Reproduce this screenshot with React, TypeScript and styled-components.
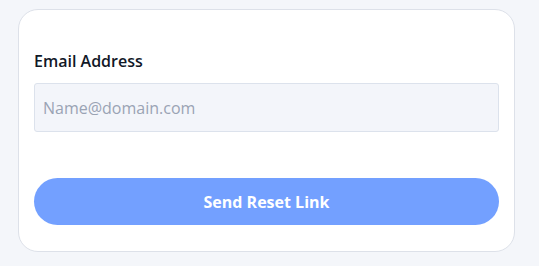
import React from 'react';
import styled, { createGlobalStyle } from 'styled-components';

const GlobalStyle = createGlobalStyle`
  html, body {
    margin: 0;
    padding: 0;
    background: #f4f6fa;
    font-family: "Open Sans", "DejaVu Sans", sans-serif;
  }
`;

const Page = styled.div`
  padding: 9px 0 0 18px;
`;

const Card = styled.form`
  width: 497px;
  box-sizing: border-box;
  background: #ffffff;
  border: 1px solid #dde1e9;
  border-radius: 20px;
  padding: 40px 15px 26px;
  display: flex;
  flex-direction: column;
`;

const Label = styled.label`
  font-size: 16px;
  font-weight: 600;
  line-height: 22px;
  color: #111827;
  margin-bottom: 11px;
`;

const Input = styled.input`
  height: 49px;
  box-sizing: border-box;
  width: 100%;
  background: #f3f5fa;
  border: 1px solid #dce2ec;
  border-radius: 3px;
  padding: 0 8px;
  font-family: inherit;
  font-size: 16px;
  color: #111827;
  outline: none;

  &::placeholder {
    color: #9aa3b4;
  }
`;

const SubmitButton = styled.button`
  margin-top: 46px;
  height: 47px;
  width: 100%;
  border: none;
  border-radius: 24px;
  background: #73a0ff;
  color: #ffffff;
  font-family: inherit;
  font-size: 16px;
  font-weight: 700;
  cursor: pointer;
`;

export default function App() {
  return (
    <>
      <GlobalStyle />
      <Page>
        <Card onSubmit={e => e.preventDefault()}>
          <Label htmlFor="email">Email Address</Label>
          <Input id="email" type="email" placeholder="Name@domain.com" />
          <SubmitButton type="submit">Send Reset Link</SubmitButton>
        </Card>
      </Page>
    </>
  );
}
